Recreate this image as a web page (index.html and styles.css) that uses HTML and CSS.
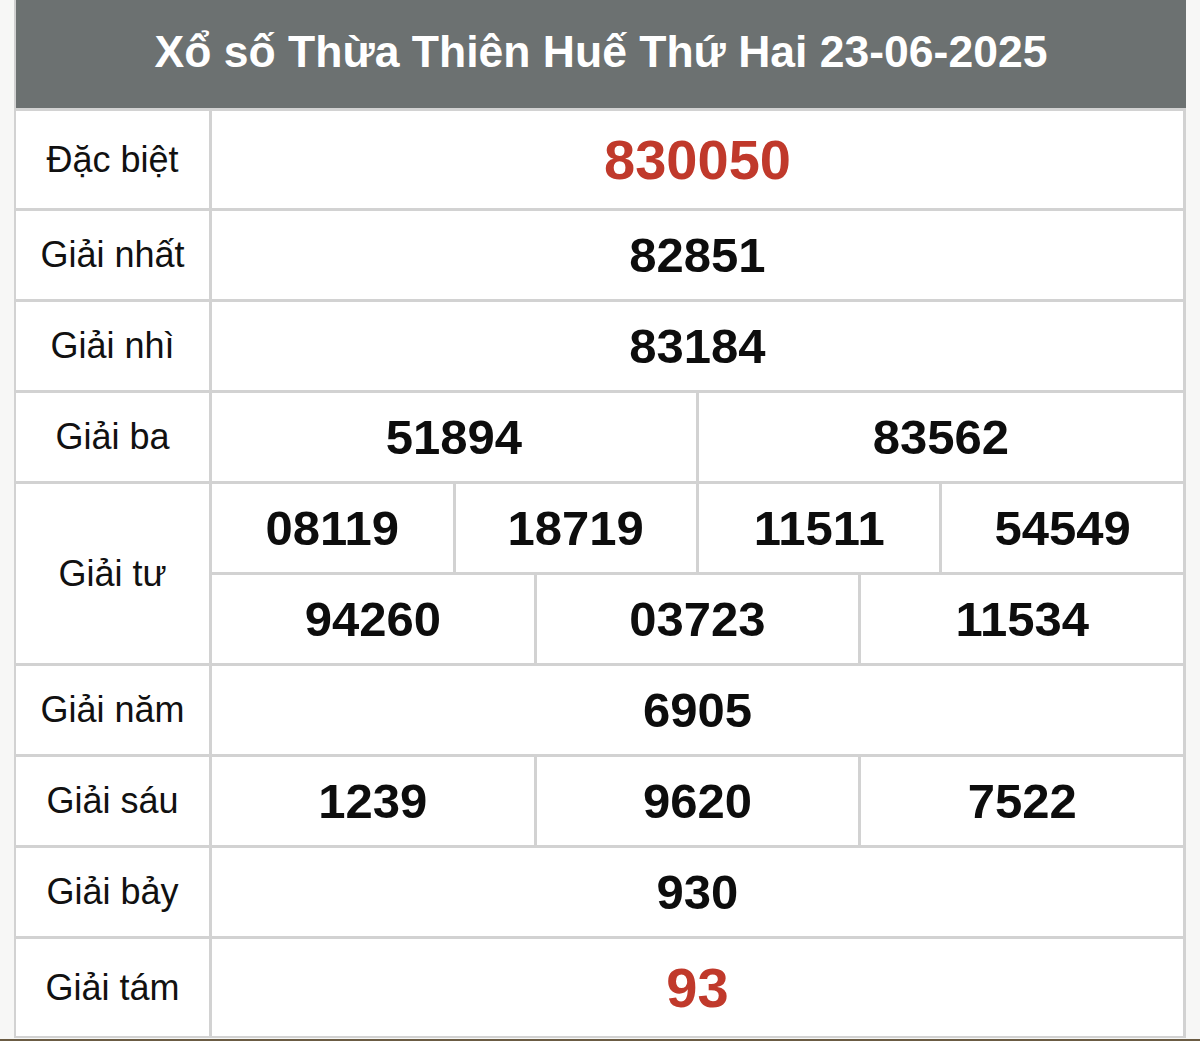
FILE: index.html
```html
<!DOCTYPE html>
<html lang="vi">
<head>
<meta charset="utf-8">
<title>Xổ số Thừa Thiên Huế</title>
<link rel="stylesheet" href="styles.css">
</head>
<body>
<div class="page">
  <div class="board">
    <div class="title">Xổ số Thừa Thiên Huế Thứ Hai 23-06-2025</div>
    <div class="grid">
      <div class="label">Đặc biệt</div>
      <div class="num red big span12">830050</div>

      <div class="label">Giải nhất</div>
      <div class="num span12">82851</div>

      <div class="label">Giải nhì</div>
      <div class="num span12">83184</div>

      <div class="label">Giải ba</div>
      <div class="num span6">51894</div>
      <div class="num span6">83562</div>

      <div class="label tall">Giải tư</div>
      <div class="num span3">08119</div>
      <div class="num span3">18719</div>
      <div class="num span3">11511</div>
      <div class="num span3">54549</div>
      <div class="num span4">94260</div>
      <div class="num span4">03723</div>
      <div class="num span4">11534</div>

      <div class="label">Giải năm</div>
      <div class="num span12">6905</div>

      <div class="label">Giải sáu</div>
      <div class="num span4">1239</div>
      <div class="num span4">9620</div>
      <div class="num span4">7522</div>

      <div class="label">Giải bảy</div>
      <div class="num span12">930</div>

      <div class="label">Giải tám</div>
      <div class="num red big span12">93</div>
    </div>
  </div>
  <div class="bottom-bar"></div>
</div>
</body>
</html>
```

FILE: styles.css
```css
* { box-sizing: border-box; }

html, body {
  margin: 0;
  padding: 0;
  background: #f7f7f6;
}

body {
  font-family: "Liberation Sans", Arial, sans-serif;
  color: #111;
}

.page {
  width: 1200px;
  height: 1041px;
  display: flex;
  flex-direction: column;
  overflow: hidden;
}

.board {
  margin: 0 14px;
  display: flex;
  flex-direction: column;
}

.title {
  height: 108px;
  background: #6c7171;
  color: #ffffff;
  font-weight: bold;
  font-size: 44.5px;
  display: flex;
  align-items: center;
  justify-content: center;
  padding-bottom: 4px;
  border-left: 2px solid #d0d0d0;
}

.grid {
  display: grid;
  grid-template-columns: 193px repeat(12, 1fr);
  grid-template-rows: 97px repeat(8, 88px) 97px;
  gap: 3px;
  padding: 3px 3px 2px 2px;
  background: #d2d2d2;
}

.grid > div {
  background: #ffffff;
  display: flex;
  align-items: center;
  justify-content: center;
}

.label {
  font-size: 36px;
  grid-column: 1;
  color: #111;
}

.tall {
  grid-row: span 2;
}

.num {
  font-weight: bold;
  font-size: 49px;
  color: #0d0d0d;
}

.red { color: #c0392b; }
.big { font-size: 56px; }

.span12 { grid-column: span 12; }
.span6 { grid-column: span 6; }
.span4 { grid-column: span 4; }
.span3 { grid-column: span 3; }

.bottom-bar {
  margin-top: 1px;
  height: 3px;
  background: #6b5c44;
}
```
